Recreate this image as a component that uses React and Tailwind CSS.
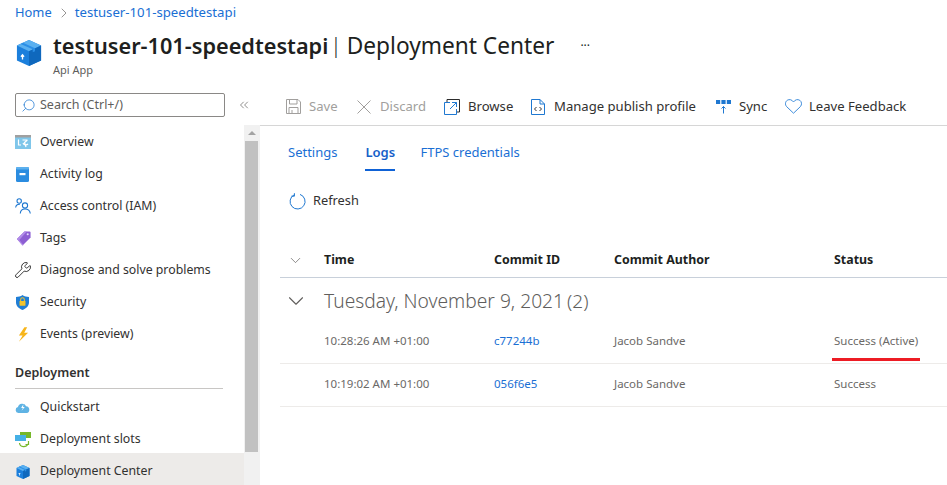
import { ChevronRight, ChevronDown, ChevronsLeft, Search, Wrench } from 'lucide-react';

function CubeIcon({ size = 16 }) {
  return (
    <svg width={size} height={size} viewBox="0 0 26 28">
      <path d="M13 0 L26 6 V22 L13 28 L0 22 V6 Z" fill="#1b7fdc" />
      <path d="M13 0 L26 6 L13 12 L0 6 Z" fill="#5ab0f0" />
      <path d="M13 12 L26 6 V22 L13 28 Z" fill="#0f68bd" />
      <path d="M6.5 3 L19.5 9 V12 L17 13.2 V10 L4 4.2 Z" fill="#2a8ee6" />
      <path d="M6 21 V16.5 M4.3 18 L6 16 L7.7 18" stroke="#fff" strokeWidth="1.4" fill="none" />
    </svg>
  );
}

function OverviewIcon() {
  return (
    <svg width="16" height="14" viewBox="0 0 16 14">
      <rect width="16" height="14" fill="#7fc6ea" />
      <rect x="0" y="0" width="16" height="2.5" fill="#a0a0a0" />
      <path d="M3.5 4.5 V10 H6 M7.5 5 H12.5 M8 8 A3 3 0 0 0 13 9 M12.5 5 L9.5 7.5 L11 12" stroke="#fff" strokeWidth="1.2" fill="none" />
    </svg>
  );
}

function LogIcon() {
  return (
    <svg width="13" height="15" viewBox="0 0 13 15">
      <rect width="13" height="15" rx="1.5" fill="#2b8ce0" />
      <rect x="0" y="0" width="13" height="2.5" rx="1.2" fill="#5cb0ee" />
      <rect x="3.5" y="6" width="6" height="2.2" fill="#fff" />
    </svg>
  );
}

function AccessIcon() {
  return (
    <svg width="16" height="16" viewBox="0 0 16 16" fill="none" stroke="#1f78d1" strokeWidth="1.1">
      <circle cx="4.2" cy="3" r="2.2" />
      <path d="M0.6 9.5 C1 6.8 3 6 5 6.3" />
      <circle cx="10" cy="7.5" r="2.6" />
      <path d="M5.3 15.5 C5.5 12 8 11 10 11 C12 11 14.8 12 15.3 15.5" />
    </svg>
  );
}

function TagIcon() {
  return (
    <svg width="15" height="15" viewBox="0 0 15 16">
      <path d="M8.5 0.5 H14 A1 1 0 0 1 15 1.5 V7 L6.5 15.5 L0.5 8.5 Z" fill="#8d5fd3" />
      <path d="M0.5 8.5 L8.5 0.5 H11 L3 9.5 L7.5 15 L6.5 15.5 Z" fill="#b18ce8" />
      <circle cx="12" cy="3.5" r="1.1" fill="#e6dcf8" />
    </svg>
  );
}

function ShieldIcon() {
  return (
    <svg width="13" height="15" viewBox="0 0 14 16">
      <path d="M7 0 C9 1.6 11.5 2 14 2 V8 C14 12 10.5 14.8 7 16 C3.5 14.8 0 12 0 8 V2 C2.5 2 5 1.6 7 0 Z" fill="#1f7ed6" />
      <rect x="3.8" y="6.5" width="6.4" height="5" rx="0.5" fill="#f3c42c" />
      <path d="M5 6.5 V5 A2 2 0 0 1 9 5 V6.5" stroke="#f3c42c" strokeWidth="1.1" fill="none" />
    </svg>
  );
}

function BoltIcon() {
  return (
    <svg width="11" height="15" viewBox="0 0 12 16">
      <path d="M7 0 L1 9 H5 L1 16 L11 6 H6.8 L10 0 Z" fill="#f7b51b" />
    </svg>
  );
}

function CloudIcon() {
  return (
    <svg width="15" height="10" viewBox="0 0 16 11">
      <path d="M3.5 11 A3.3 3.3 0 0 1 3 4.5 A4.8 4.8 0 0 1 12 3.5 A3.8 3.8 0 0 1 12.5 11 Z" fill="#5fb3e4" />
      <path d="M9 1.5 L6.5 5.5 H8.5 L7 8.5 L10.5 4.5 H8.6 Z" fill="#fff" />
    </svg>
  );
}

function SlotsIcon() {
  return (
    <svg width="16" height="16" viewBox="0 0 16 16">
      <rect x="5" y="0" width="11" height="6" fill="#76b82a" />
      <rect x="0" y="3" width="11" height="6" fill="#45b0e6" />
      <path d="M4.5 11 C5 15.5 11 16 13 12 M13.5 9 V12.5 H10.5" stroke="#76b82a" strokeWidth="1.2" fill="none" />
    </svg>
  );
}

function SaveIcon() {
  return (
    <svg width="15" height="15" viewBox="0 0 15 15" fill="none" stroke="#a19f9d" strokeWidth="1">
      <path d="M0.5 0.5 H12 L14.5 3 V14.5 H0.5 Z" />
      <path d="M3.5 0.5 V5 H11 V0.5" />
      <path d="M3 14.5 V8.5 H12 V14.5 M6 11 V14.5" />
    </svg>
  );
}

function CloseIcon() {
  return (
    <svg width="14" height="14" viewBox="0 0 14 14" fill="none" stroke="#a19f9d" strokeWidth="1">
      <path d="M0.5 0.5 L13.5 13.5 M13.5 0.5 L0.5 13.5" />
    </svg>
  );
}

function BrowseIcon() {
  return (
    <svg width="16" height="16" viewBox="0 0 16 16" fill="none">
      <path d="M3 0.5 H15.5 V13 H12.5 M3 0.5 V3" stroke="#2b2b2b" strokeWidth="1" />
      <path d="M0.5 3.5 H6 M0.5 3.5 V15.5 H12.5 V10" stroke="#1f78d1" strokeWidth="1" />
      <path d="M6 10 L12.5 3.5 M8 3.5 H12.5 V8" stroke="#1f78d1" strokeWidth="1" />
    </svg>
  );
}

function PublishIcon() {
  return (
    <svg width="14" height="16" viewBox="0 0 14 16" fill="none" stroke="#1f78d1" strokeWidth="1">
      <path d="M0.5 0.5 H9 L13.5 5 V15.5 H0.5 Z" />
      <path d="M9 0.5 V5 H13.5" />
      <path d="M5.5 8 L3.5 10 L5.5 12 M8.5 8 L10.5 10 L8.5 12" stroke="#333" />
    </svg>
  );
}

function SyncIcon() {
  return (
    <svg width="15" height="14" viewBox="0 0 15 14">
      <rect x="0" y="0" width="4.2" height="4" fill="#1f78d1" />
      <rect x="5.4" y="0" width="4.2" height="4" fill="#1f78d1" />
      <rect x="10.8" y="0" width="4.2" height="4" fill="#1f78d1" />
      <path d="M7.5 13.5 V6.5 M5.5 8.5 L7.5 6.5 L9.5 8.5" stroke="#1f78d1" strokeWidth="1" fill="none" />
    </svg>
  );
}

function HeartIcon() {
  return (
    <svg width="17" height="15" viewBox="0 0 17 15" fill="none" stroke="#3f8ddb" strokeWidth="1">
      <path d="M8.5 14.2 L1.6 7.6 C-0.2 5.6 0.3 2.6 2.2 1.3 C4.4 -0.1 7 0.7 8.5 3 C10 0.7 12.6 -0.1 14.8 1.3 C16.7 2.6 17.2 5.6 15.4 7.6 Z" />
    </svg>
  );
}

function RefreshIcon() {
  return (
    <svg width="17" height="17" viewBox="0 0 17 17" fill="none" stroke="#1f78d1" strokeWidth="1">
      <path d="M5.2 1.8 A7.5 7.5 0 1 0 11 1.4" />
      <path d="M5.4 0.2 V3.2 H2.4" />
    </svg>
  );
}

const navItems = [
  { label: 'Overview', icon: <OverviewIcon /> },
  { label: 'Activity log', icon: <span className="ml-[1px]"><LogIcon /></span> },
  { label: 'Access control (IAM)', icon: <AccessIcon /> },
  { label: 'Tags', icon: <span className="ml-[1px]"><TagIcon /></span> },
  { label: 'Diagnose and solve problems', icon: <Wrench size={18} strokeWidth={1.1} color="#111" className="-ml-[1px]" /> },
  { label: 'Security', icon: <span className="ml-[1px]"><ShieldIcon /></span> },
  { label: 'Events (preview)', icon: <span className="ml-[3px]"><BoltIcon /></span> },
];

const deployItems = [
  { label: 'Quickstart', icon: <CloudIcon /> },
  { label: 'Deployment slots', icon: <SlotsIcon /> },
  { label: 'Deployment Center', icon: <span className="ml-[1px]"><CubeIcon size={14} /></span>, active: true },
];

function NavRow({ item, className = '' }) {
  return (
    <div className={`flex items-center h-8 pl-[15px] ${item.active ? 'bg-[#edebe9]' : ''} ${className}`}>
      <span className="w-[25px] flex items-center">{item.icon}</span>
      <span className="text-[12.3px] text-[#323130]">{item.label}</span>
    </div>
  );
}

function ToolButton({ icon, label, disabled, iconWidth = 'w-[23px]', className }) {
  return (
    <div className={`flex items-center ${className}`}>
      <span className={`${iconWidth} flex items-center`}>{icon}</span>
      <span className={`text-[13.1px] ${disabled ? 'text-[#a19f9d]' : 'text-[#323130]'}`}>{label}</span>
    </div>
  );
}

function LogRow({ time, commit, status, marked }) {
  return (
    <div className="relative flex items-center h-[43px] pb-[2px] border-b border-[#edebe9] text-[11.5px] text-[#6b6967]">
      <span className="ml-[44px] w-[170px]">{time}</span>
      <span className="w-[120px] text-[#1a6fd4]">{commit}</span>
      <span className="w-[220px]">Jacob Sandve</span>
      <span>{status}</span>
      {marked && <div className="absolute left-[552px] top-[37px] w-[88px] h-[3px] bg-[#ed1c24]" />}
    </div>
  );
}

export default function App() {
  return (
    <div className="w-[947px] h-[485px] overflow-hidden bg-white flex flex-col font-['Noto_Sans',sans-serif]">
      <div className="flex items-center h-[26px] pl-[15px] text-[12.9px] text-[#1a6fd4]">
        <span>Home</span>
        <ChevronRight size={16} strokeWidth={1} color="#605e5c" className="ml-[4px] mr-[3px]" />
        <span className="text-[13.2px]">testuser-101-speedtestapi</span>
      </div>

      <div className="flex h-[61px] pl-[16px]">
        <div className="pt-[14px] w-[37px]"><CubeIcon size={26} /></div>
        <div className="pt-[3px]">
          <div className="flex items-center h-[34px] text-[#201f1e]">
            <span className="text-[21.7px] font-semibold">testuser-101-speedtestapi</span>
            <span className="ml-[2px] text-[21px] font-light">|</span>
            <span className="ml-[5px] text-[22.7px]">Deployment Center</span>
            <span className="ml-[26px] text-[12px] -mt-[1px]">···</span>
          </div>
          <div className="text-[11px] text-[#605e5c] -mt-[1px]">Api App</div>
        </div>
      </div>

      <div className="flex flex-1 min-h-0">
        <aside className="w-[260px] shrink-0 flex">
          <div className="w-[244px] shrink-0">
            <div className="h-[39px] flex items-start pt-[6px]">
              <div className="ml-[15px] w-[210px] h-[24px] border border-[#8a8886] rounded-[2px] flex items-center pl-[5px] gap-[4px]">
                <Search size={15} strokeWidth={1.2} color="#1f78d1" className="-scale-x-100" />
                <span className="text-[12.5px] text-[#605e5c]">Search (Ctrl+/)</span>
              </div>
            </div>
            {navItems.map((item) => <NavRow key={item.label} item={item} />)}
            <div className="mt-[6px] ml-[15px] mr-[21px] h-[33px] pt-[3px] flex items-center border-b border-[#c8c6c4] text-[12.5px] font-semibold text-[#323130]">
              Deployment
            </div>
            {deployItems.map((item) => <NavRow key={item.label} item={item} className="pt-[5px]" />)}
          </div>
          <div className="w-[16px] flex flex-col">
            <div className="h-[38px] -ml-[7px] flex items-start pt-[11px]">
              <ChevronsLeft size={14} strokeWidth={1.2} color="#605e5c" />
            </div>
            <div className="flex-1 bg-[#f1f1f1] flex flex-col">
              <div className="h-[16px] flex items-center justify-center">
                <div className="w-0 h-0 border-x-[4px] border-x-transparent border-b-[4px] border-b-[#a3a3a3]" />
              </div>
              <div className="h-[311px] ml-[1px] mr-[2px] bg-[#c1c1c1]" />
            </div>
          </div>
        </aside>

        <main className="flex-1 min-w-0">
          <div className="flex items-center h-[39px] pt-[2px] border-b border-[#d6d6d6] pl-[26px]">
            <ToolButton disabled icon={<SaveIcon />} label="Save" className="w-[71px]" />
            <ToolButton disabled icon={<CloseIcon />} label="Discard" className="w-[87px]" />
            <ToolButton icon={<BrowseIcon />} label="Browse" iconWidth="w-[24px]" className="w-[87px]" />
            <ToolButton icon={<PublishIcon />} label="Manage publish profile" className="w-[185px]" />
            <ToolButton icon={<SyncIcon />} label="Sync" className="w-[69px]" />
            <ToolButton icon={<HeartIcon />} label="Leave Feedback" iconWidth="w-[24px]" />
          </div>

          <div className="flex pl-[28px] h-[45px] text-[13px] text-[#1a6fd4]">
            <span className="pt-[17px] mr-[28px]">Settings</span>
            <span className="pt-[17px] mr-[25px] h-[45px] w-[30px] font-semibold text-[#1560c9] border-b-2 border-[#0f62d6]">Logs</span>
            <span className="pt-[17px]">FTPS credentials</span>
          </div>

          <div className="flex items-center h-[30px] mt-[15px] pl-[29px] gap-[7px]">
            <RefreshIcon />
            <span className="text-[12.8px] text-[#323130]">Refresh</span>
          </div>

          <div className="ml-[20px] mt-[29px]">
            <div className="flex items-center h-[33px] pb-[2px] border-b border-[#c8d0da] text-[12.4px] font-bold text-[#201f1e]">
              <ChevronDown size={17} strokeWidth={1} color="#605e5c" className="ml-[7px] mr-[20px]" />
              <span className="w-[170px]">Time</span>
              <span className="w-[120px]">Commit ID</span>
              <span className="w-[220px]">Commit Author</span>
              <span>Status</span>
            </div>
            <div className="flex items-center h-[43px] pt-[4px]">
              <ChevronDown size={26} strokeWidth={1} color="#605e5c" className="ml-[3px] mr-[15px] -mt-[2px]" />
              <span className="text-[19.2px] font-light text-[#605e5c]">Tuesday, November 9, 2021</span>
              <span className="ml-[3px] text-[19px] font-light text-[#605e5c]">(2)</span>
            </div>
            <LogRow time="10:28:26 AM +01:00" commit="c77244b" status="Success (Active)" marked />
            <LogRow time="10:19:02 AM +01:00" commit="056f6e5" status="Success" />
          </div>
        </main>
      </div>
    </div>
  );
}
